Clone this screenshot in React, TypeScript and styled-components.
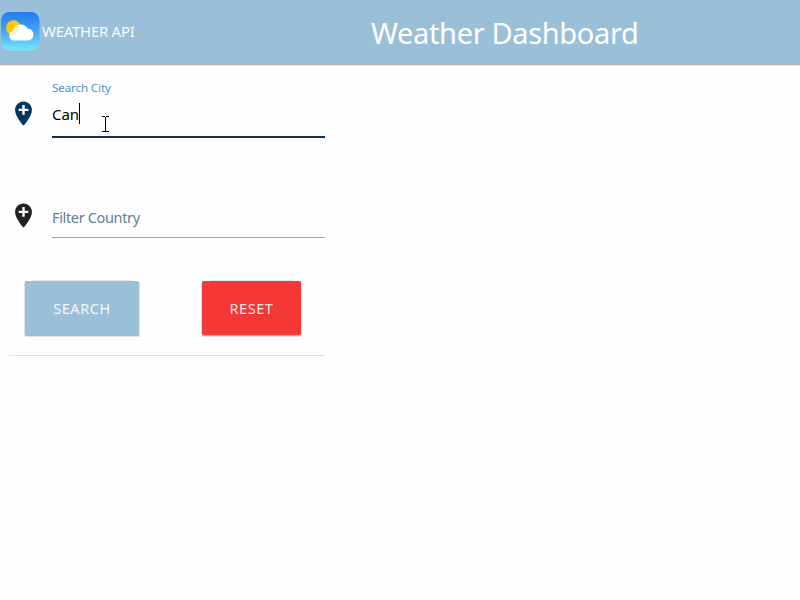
import React from "react";
import styled, { createGlobalStyle } from "styled-components";

const GlobalStyle = createGlobalStyle`
  * { box-sizing: border-box; }
  body { margin: 0; background: #fefefe; overflow: hidden; font-family: "Noto Sans", "Open Sans", sans-serif; }
`;

const Page = styled.div`
  position: relative;
  height: 600px;
`;

const Header = styled.header`
  display: flex;
  align-items: center;
  height: 63px;
  background: #9abfd9;
  color: #fff;
  box-shadow: 0 1px 0 #a5b8c5, 0 2px 0 #b8b8b8, 0 3px 0 #e6e6e6;
`;

const Brand = styled.div`
  display: flex;
  align-items: center;
  width: 371px;
  height: 63px;
  padding: 0 0 1px 1px;
`;

const BrandName = styled.span`
  margin-left: 2px;
  font-size: 15px;
  line-height: 20px;
  letter-spacing: -0.28px;
  white-space: nowrap;
  color: rgba(255, 255, 255, 0.94);
`;

const Title = styled.h1`
  margin: 0;
  padding-top: 3px;
  font-size: 29px;
  line-height: 40px;
  font-weight: 400;
  letter-spacing: -0.35px;
  white-space: nowrap;
`;

const Panel = styled.main`
  width: 316px;
  height: 293px;
  margin-left: 9px;
  border-bottom: 1px solid #e0e0e0;
`;

const Field = styled.div<{ $gap: number }>`
  display: grid;
  grid-template-columns: 29px 273px;
  column-gap: 14px;
  padding-top: ${(p) => p.$gap}px;
`;

const PinSlot = styled.div<{ $offset: number }>`
  height: 29px;
  margin-top: ${(p) => p.$offset}px;

  svg { display: block; }
`;

const Label = styled.label`
  display: block;
  height: 18px;
  font-size: 11.6px;
  line-height: 18px;
  letter-spacing: -0.12px;
  color: #4a94c8;
`;

const Input = styled.div<{ $active?: boolean }>`
  display: flex;
  align-items: center;
  height: 41px;
  padding: ${(p) => (p.$active ? "0 0 6px" : "0 0 1px")};
  border-bottom: ${(p) => (p.$active ? "2px solid #05355f" : "1px solid #9e9e9e")};
  font-size: ${(p) => (p.$active ? 15 : 14.5)}px;
  letter-spacing: ${(p) => (p.$active ? -0.1 : -0.35)}px;
  color: ${(p) => (p.$active ? "#000" : "#5f7f95")};
`;

const Caret = styled.span`
  width: 1px;
  height: 21px;
  background: #000;
`;

const Buttons = styled.div`
  display: flex;
  gap: 63px;
  margin: 43px 0 0 16px;
`;

const Button = styled.button<{ $width: number; $color: string }>`
  width: ${(p) => p.$width}px;
  height: 54px;
  padding: 0;
  border: 0;
  border-radius: 2px;
  background: ${(p) => p.$color};
  box-shadow: 0 1px 0 #b4b4b4, 0 1px 0 1px #e0e0e0, 0 -9px 0 -8px #e6e6e6;
  color: rgba(255, 255, 255, 0.88);
  font: 400 14.5px/54px "Noto Sans", "Open Sans", sans-serif;
  letter-spacing: 0.55px;
`;

const Pointer = styled.svg`
  position: absolute;
  left: 101px;
  top: 116px;
`;

const Pin = ({ color }: { color: string }) => (
  <svg width="29" height="29" viewBox="0 0 24 24" fill={color}>
    <path d="M12 2C8.14 2 5 5.14 5 9c0 5.25 7 13 7 13s7-7.75 7-13c0-3.86-3.14-7-7-7zm4 8h-3v3h-2v-3H8V8h3V5h2v3h3v2z" />
  </svg>
);

const WeatherLogo = () => (
  <svg width="39" height="39" viewBox="0 0 39 39">
    <defs>
      <linearGradient id="sky" x1="0" y1="0" x2="0" y2="1">
        <stop offset="0" stopColor="#2379ee" />
        <stop offset="0.5" stopColor="#46a5f2" />
        <stop offset="1" stopColor="#76e6ff" />
      </linearGradient>
    </defs>
    <rect width="38.5" height="38.5" rx="8.5" fill="url(#sky)" />
    <circle cx="12.5" cy="15.8" r="7.5" fill="#fec60c" />
    <path
      d="M13 28.5a4.900 4.900 0 0 1-1.200-9.600 8 8 0 0 1 14.700-2.300 5.800 5.800 0 1 1 .2 11.900z"
      fill="#fff"
    />
    <path
      d="M11.800 18.900c.5-2.900 2.600-5.200 5.400-6a7.500 7.500 0 0 1-4.800 10.300c-1.500.2-2.700-.2-3.400-.8.3-1.800 1.300-3 2.800-3.500z"
      fill="#fff0cd"
    />
  </svg>
);

export default function App() {
  return (
    <Page>
      <GlobalStyle />
      <Header>
        <Brand>
          <WeatherLogo />
          <BrandName>WEATHER API</BrandName>
        </Brand>
        <Title>Weather Dashboard</Title>
      </Header>
      <Panel>
        <Field $gap={16}>
          <PinSlot $offset={20}><Pin color="#05355f" /></PinSlot>
          <div>
            <Label>Search City</Label>
            <Input $active>Can<Caret /></Input>
          </div>
        </Field>
        <Field $gap={41}>
          <PinSlot $offset={22}><Pin color="#212121" /></PinSlot>
          <div>
            <Label />
            <Input>Filter Country</Input>
          </div>
        </Field>
        <Buttons>
          <Button $width={114} $color="#9abfd9">SEARCH</Button>
          <Button $width={99} $color="#f43838">RESET</Button>
        </Buttons>
      </Panel>
      <Pointer width="9" height="17" viewBox="0 0 9 17" fill="none" stroke="#000" shapeRendering="crispEdges">
        <path d="M1 .5h3M5 .5h3M4.500 1v15M1 15.500h3M5 15.500h3" />
      </Pointer>
    </Page>
  );
}
